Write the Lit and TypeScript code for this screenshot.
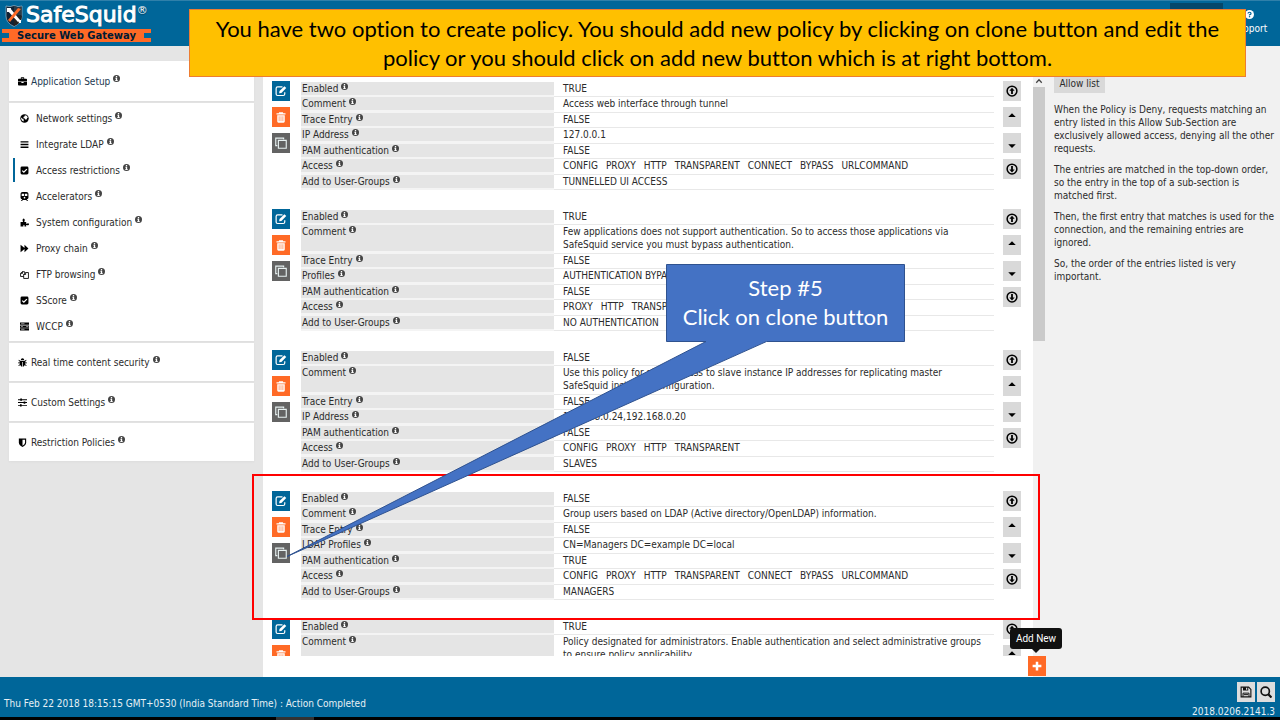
import { LitElement, html, svg, css, nothing } from "lit";
import { customElement, property } from "lit/decorators.js";

type Field = { label: string; value: string | string[] };

const ALL_METHODS = ["CONFIG", "PROXY", "HTTP", "TRANSPARENT", "CONNECT", "BYPASS", "URLCOMMAND"];

const POLICIES: Field[][] = [
  [
    { label: "Enabled", value: "TRUE" },
    { label: "Comment", value: "Access web interface through tunnel" },
    { label: "Trace Entry", value: "FALSE" },
    { label: "IP Address", value: "127.0.0.1" },
    { label: "PAM authentication", value: "FALSE" },
    { label: "Access", value: ALL_METHODS },
    { label: "Add to User-Groups", value: "TUNNELLED UI ACCESS" },
  ],
  [
    { label: "Enabled", value: "TRUE" },
    {
      label: "Comment",
      value:
        "Few applications does not support authentication. So to access those applications via SafeSquid service you must bypass authentication.",
    },
    { label: "Trace Entry", value: "FALSE" },
    { label: "Profiles", value: "AUTHENTICATION BYPASS" },
    { label: "PAM authentication", value: "FALSE" },
    { label: "Access", value: ["PROXY", "HTTP", "TRANSPARENT"] },
    { label: "Add to User-Groups", value: "NO AUTHENTICATION" },
  ],
  [
    { label: "Enabled", value: "FALSE" },
    {
      label: "Comment",
      value:
        "Use this policy for allow access to slave instance IP addresses for replicating master SafeSquid instance configuration.",
    },
    { label: "Trace Entry", value: "FALSE" },
    { label: "IP Address", value: "192.168.0.24,192.168.0.20" },
    { label: "PAM authentication", value: "FALSE" },
    { label: "Access", value: ["CONFIG", "PROXY", "HTTP", "TRANSPARENT"] },
    { label: "Add to User-Groups", value: "SLAVES" },
  ],
  [
    { label: "Enabled", value: "FALSE" },
    { label: "Comment", value: "Group users based on LDAP (Active directory/OpenLDAP) information." },
    { label: "Trace Entry", value: "FALSE" },
    { label: "LDAP Profiles", value: "CN=Managers DC=example DC=local" },
    { label: "PAM authentication", value: "TRUE" },
    { label: "Access", value: ALL_METHODS },
    { label: "Add to User-Groups", value: "MANAGERS" },
  ],
  [
    { label: "Enabled", value: "TRUE" },
    {
      label: "Comment",
      value:
        "Policy designated for administrators. Enable authentication and select administrative groups to ensure policy applicability.",
    },
  ],
];

const ICONS: Record<string, unknown> = {
  info: svg`<circle cx="8" cy="8" r="8"/><path fill="#fff" d="M6.500 2.500h3v2.600h-3zM5.500 6.500h4v5h1.200v2H5.300v-2h1.200v-3h-1z"/>`,
  briefcase: svg`<path d="M5 3V1.500Q5 .5 6 .5h4q1 0 1 1V3h3.500Q16 3 16 4.500V8H0V4.500Q0 3 1.500 3zM6.500 3h3V2h-3zM0 9h6v1.500h4V9h6v4.500q0 1.500-1.500 1.500h-13Q0 15 0 13.500z"/>`,
  globe: svg`<circle cx="8" cy="8" r="7.500"/><path fill="#fff" d="M8.500 2.200 12 3l2 3-1.500 1-.5 2.500-2 .5-1.500-2L6 7.500 6.500 5l2-1zM2 6l2.500 2.500L7 10l-1 3.500-2.500-2L2 9z"/>`,
  bars: svg`<path d="M1 2h14v2.500H1zM1 6.800h14v2.500H1zM1 11.500h14V14H1z"/>`,
  check: svg`<rect x="1" y="1" width="14" height="14" rx="2.500"/><path fill="none" stroke="#fff" stroke-width="2.200" d="m4 8.300 2.800 2.700L12.200 5.500"/>`,
  train: svg`<path fill-rule="evenodd" d="M4.500 0h7Q15 0 15 3v7q0 2.500-3 2.800l2.500 3.200h-2l-1.700-2H5.200l-1.700 2h-2L4 12.800Q1 12.500 1 10V3q0-3 3.500-3zM3 3v4h4.300V3zm5.700 0v4H13V3z"/><circle cx="8" cy="10" r="1.500" fill="#fff"/>`,
  puzzle: svg`<path d="M1 7h4q.6-1-.2-2Q4 3.500 5 2q1.500-1.800 3 0 1 1.500.2 3Q7.500 6 8 7h3v3q1 .5 2-.3 3-.7 3 1.500t-3 1.500q-1-.8-2-.2V15H8v-2q-1-1.800-2 0v2H1z"/>`,
  forward: svg`<path d="M1 1.500 8 7V1.500L15 8l-7 6.500V9l-7 5.500z"/>`,
  copy: svg`<path fill="none" stroke="currentColor" stroke-width="1.500" d="M6.500 11.500H1V6l3-3h4v2M4.500 3v3H1M6.500 15V8l3.500-3.500h5V15zM10 4.500V8H6.500"/>`,
  server: svg`<path d="M0 1h16v4H0zM0 6h16v4H0zM0 11h16v4H0z"/><path stroke="#fff" d="M2 3h6M2 8h3M2 13h6M11 8h4"/>`,
  bug: svg`<path d="M5 3.500q0-3 3-3t3 3zM4 5h8l2.500-2 .8 1-2.300 2.300V8H16v1.300h-3l-.3 1.700 2.800 2.300-1 1L12 12.500Q11 15 8.600 15.500V7H7.400v8.500Q5 15 4 12.500l-2.500 1.800-1-1L3.300 11 3 9.300H0V8h3V6.300L.7 4l.8-1z"/>`,
  sliders: svg`<path d="M0 2.300h16v1.500H0zM0 7.300h16v1.500H0zM0 12.300h16v1.500H0z"/><path d="M4 1h3v4H4zM10 6h3v4h-3zM3.500 11h3v4h-3z"/>`,
  shield: svg`<path d="M1.500 1h13v7q0 5-6.500 8-6.500-3-6.500-8z"/><path fill="#fff" d="M8 3h4.500v5Q12.500 11.500 8 13.800z"/>`,
  edit: svg`<path fill="none" stroke="currentColor" stroke-width="1.600" d="M10 2.500H3.500q-2 0-2 2v7.500q0 2 2 2H11q2 0 2-2V9.500"/><path d="m6 8 6.500-6.500L15 4 8.500 10.500 5.500 11z"/>`,
  trash: svg`<path d="M5.500 1.500h5l.5 1.500h3v1.800H2V3h3zM3 5.500h10V14q0 1.500-1.500 1.500h-7Q3 15.500 3 14z"/><path stroke="#ff6a26" stroke-width=".8" d="M5.500 7v6.500M8 7v6.500M10.500 7v6.500"/>`,
  clone: svg`<path fill="none" stroke="currentColor" stroke-width="1.500" d="M3 11.500H1v-10h10.500V3M4.500 4.500H15V15H4.500z"/>`,
  circleUp: svg`<circle cx="8" cy="8" r="6.500" fill="none" stroke="currentColor" stroke-width="2"/><path d="M8 3.500 11.500 7.500H9.200V12H6.800V7.500H4.500z"/>`,
  circleDown: svg`<circle cx="8" cy="8" r="6.500" fill="none" stroke="currentColor" stroke-width="2"/><path d="M8 12.500 11.500 8.500H9.200V4H6.800v4.500H4.500z"/>`,
  caretUp: svg`<path d="M3 8 8 3l5 5z"/>`,
  caretDown: svg`<path d="M3 9.500l5 5 5-5z"/>`,
  plus: svg`<path d="M6 1h4v5h5v4h-5v5H6v-5H1V6h5z"/>`,
  save: svg`<path fill="none" stroke="currentColor" stroke-width="1.500" d="M1.500 1.500h10l3 3v10h-13z"/><path d="M4 1.500h7V6H4z"/><path fill="#ddd" d="M8 2.300h1.700v2.700H8z"/><path fill="none" stroke="currentColor" stroke-width="1.300" d="M4 14.500v-5h8v5M5 11.500h6"/>`,
  search: svg`<circle cx="7" cy="7" r="5.500" fill="none" stroke="currentColor" stroke-width="2.200"/><path stroke="currentColor" stroke-width="3" d="m11 11 4.300 4.300"/>`,
  question: svg`<circle cx="8" cy="8" r="8"/><path fill="none" stroke="#069" stroke-width="2.200" d="M5.300 6.300q.2-2.300 2.800-2.300t2.600 2.200Q10.700 8 8 8.500v1.300"/><path fill="#069" d="M6.900 10.800h2.300V13H6.900z"/>`,
  chevronUp: svg`<path fill="none" stroke="currentColor" stroke-width="2.500" d="m2.500 11.500 5.500-6 5.500 6"/>`,
};

@customElement("ui-icon")
export class UiIcon extends LitElement {
  @property() name = "info";

  static styles = css`
    :host {
      display: inline-block;
      width: 9px;
      height: 9px;
      flex: none;
    }
    svg {
      display: block;
      width: 100%;
      height: 100%;
      fill: currentColor;
    }
  `;

  render() {
    return html`<svg viewBox="0 0 16 16" aria-hidden="true">${ICONS[this.name] ?? nothing}</svg>`;
  }
}

@customElement("policy-entry")
export class PolicyEntry extends LitElement {
  @property({ attribute: false }) fields: Field[] = [];

  static styles = css`
    :host {
      display: flex;
      flex: none;
      margin-bottom: 19px;
    }
    .tools {
      display: flex;
      flex-direction: column;
      gap: 6px;
      width: 18px;
      flex: none;
    }
    button {
      display: flex;
      align-items: center;
      justify-content: center;
      height: 20px;
      padding: 0;
      border: 0;
      color: #fff;
      cursor: pointer;
    }
    button ui-icon {
      width: 12px;
      height: 12px;
    }
    .edit {
      background: #069;
    }
    .delete {
      background: #ff6a26;
    }
    .clone {
      background: #636363;
      color: #e8f2f2;
    }
    .move {
      background: #d9d9d9;
      color: #000;
    }
    .fields {
      flex: 1;
      margin: 1px 9px 0 11px;
      border-collapse: separate;
      border-spacing: 0;
      table-layout: fixed;
      line-height: 13px;
      align-self: flex-start;
    }
    th,
    td {
      text-align: left;
      vertical-align: top;
      font-weight: normal;
      height: 13px;
    }
    th {
      width: 252px;
      padding: 0 0 0 1px;
      background: #e5e5e5 padding-box;
      border-bottom: 2px solid #f4f4f4;
      white-space: nowrap;
    }
    td {
      padding: 0 9px 1px 9px;
      border-bottom: 1px solid #e8e8e8;
    }
    tr:nth-child(even) td {
      padding-bottom: 2px;
    }
    tr:nth-child(even) th {
      border-bottom-width: 3px;
    }
    .info {
      width: 7px;
      height: 7px;
      margin-left: 3px;
      vertical-align: 2px;
      color: #444;
    }
    .methods {
      display: flex;
      gap: 8px;
    }
  `;

  render() {
    return html`
      <div class="tools">
        <button class="edit" aria-label="Edit"><ui-icon name="edit"></ui-icon></button>
        <button class="delete" aria-label="Delete"><ui-icon name="trash"></ui-icon></button>
        <button class="clone" aria-label="Clone"><ui-icon name="clone"></ui-icon></button>
      </div>
      <table class="fields">
        <tbody>
          ${this.fields.map(
            (f) => html`<tr>
              <th scope="row">${f.label}<ui-icon class="info" name="info"></ui-icon></th>
              <td>
                ${Array.isArray(f.value)
                  ? html`<div class="methods">${f.value.map((v) => html`<span>${v}</span>`)}</div>`
                  : f.value}
              </td>
            </tr>`
          )}
        </tbody>
      </table>
      <div class="tools">
        <button class="move" aria-label="Move to top"><ui-icon name="circleUp"></ui-icon></button>
        <button class="move" aria-label="Move up"><ui-icon name="caretUp"></ui-icon></button>
        <button class="move" aria-label="Move down"><ui-icon name="caretDown"></ui-icon></button>
        <button class="move" aria-label="Move to bottom"><ui-icon name="circleDown"></ui-icon></button>
      </div>
    `;
  }
}

const SETUP_LINKS: [string, string][] = [
  ["globe", "Network settings"],
  ["bars", "Integrate LDAP"],
  ["check", "Access restrictions"],
  ["train", "Accelerators"],
  ["puzzle", "System configuration"],
  ["forward", "Proxy chain"],
  ["copy", "FTP browsing"],
  ["check", "SScore"],
  ["server", "WCCP"],
];

const SECTIONS: [string, string][] = [
  ["bug", "Real time content security"],
  ["sliders", "Custom Settings"],
  ["shield", "Restriction Policies"],
];

const HELP = [
  "When the Policy is Deny, requests matching an entry listed in this Allow Sub-Section are exclusively allowed access, denying all the other requests.",
  "The entries are matched in the top-down order, so the entry in the top of a sub-section is matched first.",
  "Then, the first entry that matches is used for the connection, and the remaining entries are ignored.",
  "So, the order of the entries listed is very important.",
];

@customElement("app-root")
export class AppRoot extends LitElement {
  static styles = css`
    :host {
      position: relative;
      display: grid;
      grid-template-rows: 46px minmax(0, 1fr) 40px 3px;
      height: 100vh;
      overflow: hidden;
      background: #f1f1f1;
      color: #2b2b2b;
      font: 10px/13px "DejaVu Sans Condensed", "DejaVu Sans", "Noto Sans", sans-serif;
    }
    a {
      color: inherit;
      text-decoration: none;
    }
    .header {
      display: flex;
      justify-content: space-between;
      background: #069;
      border-top: 1px solid #2f80aa;
      box-sizing: border-box;
      color: #fff;
    }
    .brand {
      display: flex;
      flex-direction: column;
      padding: 3px 0 0 2px;
    }
    .brand-name {
      display: flex;
      align-items: flex-start;
      gap: 3px;
      height: 25px;
      padding-left: 3px;
      font-family: "DejaVu Sans", sans-serif;
      font-size: 22px;
      line-height: 22px;
      text-shadow: 0 1px 1px #023a58;
      -webkit-text-stroke: 1px #fff;
    }
    .crest {
      width: 18px;
      height: 22px;
      margin-top: 1px;
    }
    .registered {
      font-size: 11px;
      line-height: 14px;
      margin-left: -3px;
      -webkit-text-stroke: 0;
    }
    .tagline {
      width: 149px;
      height: 13px;
      background: #ff6a26;
      color: #001a33;
      font: bold 10px/13px "DejaVu Sans", sans-serif;
      text-align: center;
      display: flex;
      align-items: center;
      justify-content: space-between;
    }
    .tagline::before,
    .tagline::after {
      content: "";
      width: 7px;
      height: 5px;
      background: #069;
    }
    .menu {
      display: flex;
      padding: 2px 4px 0 0;
      text-align: center;
    }
    .menu a {
      width: 53px;
      padding-top: 7px;
    }
    .menu ui-icon {
      display: block;
      margin: 0 auto 3px;
    }
    .menu .current {
      height: 34px;
      background: #04476b;
    }
    .body {
      display: grid;
      grid-template-columns: 263px minmax(0, 1fr) 235px;
      min-height: 0;
    }
    .sidebar {
      display: flex;
      flex-direction: column;
      gap: 2px;
      padding: 15px 9px 0;
      background: #e5e5e5;
    }
    .card {
      background: #fff;
      box-shadow: 0 1px 2px #dcdcdc;
    }
    .section {
      display: flex;
      align-items: center;
      height: 38px;
      padding-left: 9px;
    }
    .section.first {
      height: 40px;
      color: #1d3a52;
    }
    .section ui-icon,
    .link ui-icon {
      margin-right: 4px;
      color: #000;
    }
    .links {
      display: flex;
      flex-direction: column;
      gap: 2px;
      margin: 0;
      padding: 3px 0 3px 4px;
      list-style: none;
    }
    .link {
      display: flex;
      align-items: center;
      height: 24px;
      padding-left: 5px;
      border-left: 2px solid transparent;
    }
    .link ui-icon {
      margin-right: 7px;
    }
    .link.active {
      border-color: #069;
    }
    .section .info,
    .link .info {
      width: 7px;
      height: 7px;
      margin: -5px 0 0 3px;
      color: #444;
    }
    .main {
      display: flex;
      min-width: 0;
      min-height: 0;
      background: #fff;
    }
    .list {
      flex: 1;
      min-width: 0;
      display: flex;
      flex-direction: column;
      margin: 35px 0 21px;
      padding: 0 12px 0 9px;
      overflow: hidden;
    }
    .scroll {
      display: flex;
      flex-direction: column;
      width: 12px;
      padding: 29px 0 21px;
      background: #f1f1f1;
    }
    .scroll ui-icon {
      width: 8px;
      height: 12px;
      margin: 0 2px;
      color: #444;
    }
    .thumb {
      flex: 254;
      background: #cacaca;
    }
    .rest {
      flex: 315;
    }
    .help {
      padding: 24px 2px 0 9px;
    }
    .tab {
      display: block;
      width: 51px;
      height: 23px;
      padding: 3px 0 0;
      border: 0;
      background: #d9d9d9;
      color: inherit;
      font: inherit;
      text-align: center;
      white-space: nowrap;
    }
    .help p {
      margin: 0 0 8px;
    }
    .help .tab + p {
      margin-top: 10px;
    }
    .footer {
      display: flex;
      justify-content: space-between;
      background: #069;
      color: #e6f0f5;
    }
    .status {
      padding: 20px 0 0 4px;
    }
    .footer-side {
      display: flex;
      flex-direction: column;
      align-items: flex-end;
      gap: 3px;
      padding: 5px 5px 0 0;
    }
    .footer-tools {
      display: flex;
      gap: 2px;
    }
    .footer-tools button {
      display: flex;
      align-items: center;
      justify-content: center;
      width: 18px;
      height: 20px;
      padding: 0;
      border: 0;
      background: #ddd;
      color: #111;
    }
    .footer-tools ui-icon {
      width: 12px;
      height: 12px;
    }
    .taskbar {
      padding-left: 276px;
      background: #000;
    }
    .task {
      width: 38px;
      height: 3px;
      background: #333;
    }
    .add {
      position: absolute;
      right: 234px;
      bottom: 44px;
      display: flex;
      align-items: center;
      justify-content: center;
      width: 18px;
      height: 20px;
      padding: 0;
      border: 0;
      background: #ff6a26;
      color: #fff;
    }
    .add ui-icon {
      width: 10px;
      height: 10px;
    }
    .tooltip {
      position: absolute;
      right: 218px;
      bottom: 71px;
      width: 52px;
      height: 21px;
      border-radius: 3px;
      background: #111;
      color: #fff;
      font: 10px/21px Roboto, sans-serif;
      text-align: center;
    }
    .tooltip::after {
      content: "";
      position: absolute;
      top: 21px;
      left: 22px;
      border: 4px solid transparent;
      border-top-color: #111;
      border-bottom: 0;
    }
    .frame {
      position: absolute;
      left: 252px;
      top: 474px;
      width: 784px;
      height: 142px;
      border: 2px solid #f00;
    }
    .banner {
      position: absolute;
      left: 189px;
      top: 9px;
      width: 1025px;
      padding: 4px 15px;
      border: 1px solid #ed7d31;
      background: #ffc000;
      color: #000;
      font: 22px/29px Lato, sans-serif;
      font-variant-ligatures: none;
      text-align: center;
    }
    .callout {
      position: absolute;
      left: 286px;
      top: 264px;
      width: 619px;
      height: 295px;
    }
    .callout-shape {
      display: block;
      fill: #4472c4;
      stroke: #2f528f;
    }
    .callout-text {
      position: absolute;
      top: 9px;
      right: 0;
      width: 239px;
      color: #fff;
      font: 22px/29px Lato, sans-serif;
      font-variant-ligatures: none;
      text-align: center;
    }
  `;

  private info() {
    return html`<ui-icon class="info" name="info"></ui-icon>`;
  }

  render() {
    return html`
      <header class="header">
        <div class="brand">
          <div class="brand-name">
            <svg class="crest" viewBox="0 0 18 22" aria-hidden="true">
              <path d="M1 1q4 1.500 8-.5 4 2 8 .5v10q0 7-8 10.500Q1 18 1 11z" fill="#123" stroke="#9fb8c8" stroke-width=".7" />
              <path d="M9 10.500h8q0 7.500-8 10.500z" fill="#222" />
              <path d="M9 1q4 2 7.500.5V10H9z" fill="#2b3b46" />
              <path d="M2 5l3-2 10 12-2 2z" fill="#fff" />
              <path d="M16 4l-3-1L3 15l2 2z" fill="#ff6a26" />
              <path d="M2 3l4 0-1 4-3 0zM13 15l3 0v3l-2 0z" fill="#fff" />
            </svg>
            <span>SafeSquid</span><span class="registered">®</span>
          </div>
          <div class="tagline">Secure Web Gateway</div>
        </div>
        <nav class="menu">
          <a class="current" href="#configure" aria-label="Configure"></a>
          <a href="#support"><ui-icon name="question"></ui-icon>Support</a>
        </nav>
      </header>

      <div class="body">
        <nav class="sidebar">
          <a class="card section first" href="#setup"><ui-icon name="briefcase"></ui-icon>Application Setup${this.info()}</a>
          <ul class="card links">
            ${SETUP_LINKS.map(
              ([icon, label]) => html`<li>
                <a class="link ${label === "Access restrictions" ? "active" : ""}" href="#"
                  ><ui-icon name=${icon}></ui-icon>${label}${this.info()}</a
                >
              </li>`
            )}
          </ul>
          ${SECTIONS.map(
            ([icon, label]) =>
              html`<a class="card section" href="#"><ui-icon name=${icon}></ui-icon>${label}${this.info()}</a>`
          )}
        </nav>

        <main class="main">
          <div class="list">${POLICIES.map((p) => html`<policy-entry .fields=${p}></policy-entry>`)}</div>
          <div class="scroll">
            <ui-icon name="chevronUp"></ui-icon>
            <div class="thumb"></div>
            <div class="rest"></div>
          </div>
        </main>

        <aside class="help">
          <button class="tab">Allow list</button>
          ${HELP.map((t) => html`<p>${t}</p>`)}
        </aside>
      </div>

      <footer class="footer">
        <div class="status">Thu Feb 22 2018 18:15:15 GMT+0530 (India Standard Time) : Action Completed</div>
        <div class="footer-side">
          <div class="footer-tools">
            <button aria-label="Save"><ui-icon name="save"></ui-icon></button>
            <button aria-label="Search"><ui-icon name="search"></ui-icon></button>
          </div>
          <div>2018.0206.2141.3</div>
        </div>
      </footer>
      <div class="taskbar"><div class="task"></div></div>

      <div class="tooltip" role="tooltip">Add New</div>
      <button class="add" aria-label="Add New"><ui-icon name="plus"></ui-icon></button>

      <div class="frame"></div>
      <div class="banner">
        You have two option to create policy. You should add new policy by clicking on clone button and edit the policy
        or you should click on add new button which is at right bottom.
      </div>
      <div class="callout">
        <svg class="callout-shape" width="619" height="295" viewBox="0 0 619 295" aria-hidden="true">
          <path d="M380.500.500h238v77H480.500L1 292.500 420 77.500h-39.500z" />
        </svg>
        <div class="callout-text">Step #5<br />Click on clone button</div>
      </div>
    `;
  }
}
